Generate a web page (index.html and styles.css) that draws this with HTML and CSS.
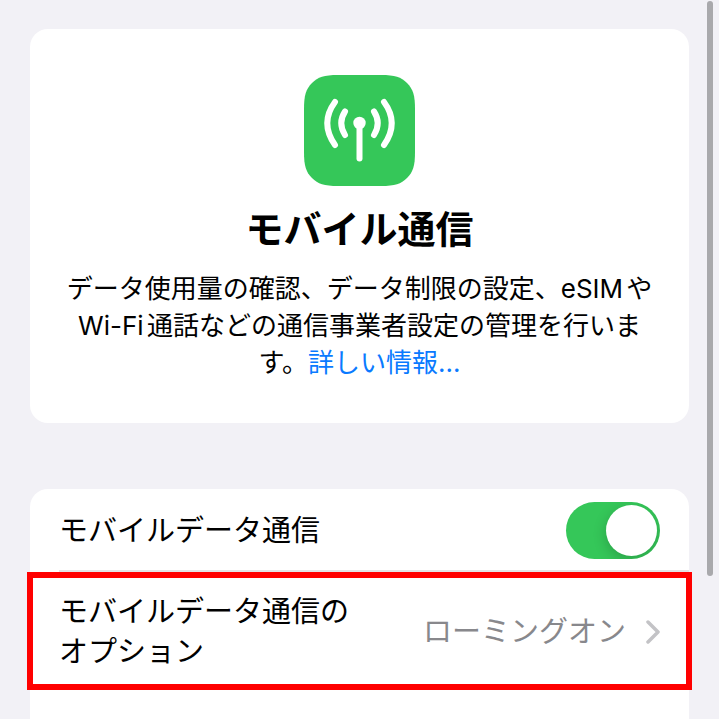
FILE: index.html
```html
<!DOCTYPE html>
<html lang="ja">
<head>
<meta charset="utf-8">
<meta name="viewport" content="width=device-width, initial-scale=1">
<title>モバイル通信</title>
<link rel="stylesheet" href="styles.css">
</head>
<body>
<main class="page">
  <section class="card intro">
    <svg class="app-icon" viewBox="0 0 111 111" aria-hidden="true">
      <path class="app-tile" d="M34 0H77C91 0 97 2 103 8C109 14 111 20 111 34V77C111 91 109 97 103 103C97 109 91 111 77 111H34C20 111 14 109 8 103C2 97 0 91 0 77V34C0 20 2 14 8 8C14 2 20 0 34 0Z"/>
      <circle class="app-dot" cx="55.500" cy="48" r="6.200"/>
      <path class="app-mast" d="M55.500 50V83.500"/>
      <path class="app-wave" d="M31 27Q15.500 48 31 70M41 36.500Q33.500 48 41 60M70 36.500Q77.500 48 70 60M80 27Q95.500 48 80 70"/>
    </svg>
    <h1 class="title">モバイル通信</h1>
    <p class="description">データ使用量の確認、データ制限の設定、eSIMやWi-Fi通話などの通信事業者設定の管理を行います。<a class="more" href="#details">詳しい情報...</a></p>
  </section>
  <section class="card settings">
    <div class="row">
      <label class="label" for="mobile-data">モバイルデータ通信</label>
      <input class="switch" id="mobile-data" type="checkbox" role="switch" checked>
    </div>
    <a class="row option" href="#options">
      <span class="label">モバイルデータ通信の<br>オプション</span>
      <span class="value">ローミングオン</span>
      <svg class="chevron" viewBox="0 0 14 24" aria-hidden="true"><path d="M2 2L12 12L2 22"/></svg>
    </a>
  </section>
</main>
<div class="scroll-indicator"></div>
</body>
</html>
```
FILE: styles.css
```css
* {
  box-sizing: border-box;
}

body {
  margin: 0;
  background: #f2f1f6;
  color: #000;
  font-family: Inter, "Noto Sans CJK JP", sans-serif;
}

.page {
  display: flex;
  flex-direction: column;
  gap: 66px;
  min-height: 100vh;
  padding: 29px 30px 0;
}

.card {
  background: #fff;
  border-radius: 18px;
}

.intro {
  display: flex;
  flex-direction: column;
  align-items: center;
  padding: 46px 30px 42px;
  text-align: center;
}

.app-icon {
  width: 111px;
  height: 111px;
}

.app-tile {
  fill: #35c759;
}

.app-dot {
  fill: #fff;
}

.app-mast,
.app-wave {
  fill: none;
  stroke: #fff;
  stroke-width: 6;
  stroke-linecap: round;
}

.title {
  margin: 15px 0 13px;
  font-size: 38px;
  font-weight: 700;
  line-height: 56px;
}

.description {
  margin: 0;
  font-size: 26px;
  line-height: 37px;
  text-autospace: normal;
}

.more {
  display: inline-block;
  color: #0a7aff;
  text-decoration: none;
}

.settings {
  flex: 1;
  border-radius: 18px 18px 0 0;
}

.row {
  display: flex;
  align-items: center;
  min-height: 83px;
  padding: 0 29px;
  color: inherit;
  font-size: 29px;
  line-height: 40px;
  text-decoration: none;
}

.label {
  flex: 1;
}

.switch {
  appearance: none;
  display: flex;
  justify-content: flex-end;
  width: 94px;
  height: 57px;
  margin: 0;
  padding: 3px;
  overflow: hidden;
  border-radius: 29px;
  background: #35c759;
}

.switch::before {
  content: "";
  width: 51px;
  height: 51px;
  border-radius: 50%;
  background: #fff;
  box-shadow: 0 4px 14px rgba(0, 0, 0, 0.2);
}

.switch:not(:checked) {
  justify-content: flex-start;
  background: #e9e9eb;
}

.option {
  position: relative;
  min-height: 118px;
  padding-top: 2px;
}

.option::before {
  content: "";
  position: absolute;
  top: -2px;
  right: 0;
  left: 29px;
  height: 2px;
  background: #e3e3e6;
}

.option::after {
  content: "";
  position: absolute;
  inset: 0 -3px 0 -3px;
  border: 6px solid #f00;
}

.value {
  color: #88888c;
}

.chevron {
  width: 14px;
  height: 24px;
  margin-left: 20px;
  fill: none;
  stroke: #c3c3c6;
  stroke-width: 3.5;
  stroke-linecap: round;
  stroke-linejoin: round;
}

.scroll-indicator {
  position: fixed;
  top: 1px;
  right: 6px;
  width: 6px;
  height: 80vh;
  border-radius: 3px;
  background: #a9a9ac;
}
```
